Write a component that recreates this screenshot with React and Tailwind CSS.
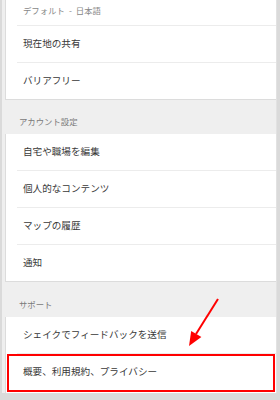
import React from "react";

const font = { fontFamily: '"Noto Sans CJK JP", "Noto Sans", sans-serif' };

function Row({ children, last, highlight }) {
  return (
    <div className="relative">
      <div className="h-[36px] flex items-center pl-[17px] text-[9.6px] text-[#383838] leading-none">
        {children}
      </div>
      {!last && <div className="ml-[11px] h-px bg-[#ececec]" />}
      {highlight && (
        <div className="absolute left-[1px] right-[1px] top-0 bottom-[-2px] border-2 border-[#ff0000]" />
      )}
    </div>
  );
}

function Header({ children, h }) {
  return (
    <div className={`${h} flex items-end pl-[14px] pb-[7px] text-[8.4px] text-[#7a7a7a] leading-[12px]`}>
      {children}
    </div>
  );
}

export default function App() {
  return (
    <div className="relative w-[280px] h-[400px] bg-[#dadada] pl-[2px] pr-[3px] overflow-hidden" style={font}>
      <div className="h-[393px] bg-[#efefef] pl-[3px] border-r border-[#e2e2e2]">
        <div className="bg-white border-b border-l border-[#dcdcdc]">
          <div className="h-[25px] pl-[17px] pt-[4px] text-[8.4px] text-[#888888] leading-[12px] flex">
            <span>デフォルト</span>
            <span className="mx-[4px]">-</span>
            <span>日本語</span>
          </div>
          <div className="ml-[11px] h-px bg-[#ececec]" />
          <Row>現在地の共有</Row>
          <Row last>バリアフリー</Row>
        </div>
        <Header h="h-[34px]">アカウント設定</Header>
        <div className="bg-white border-b border-l border-[#dcdcdc]">
          <Row>自宅や職場を編集</Row>
          <Row>個人的なコンテンツ</Row>
          <Row>マップの履歴</Row>
          <Row last>通知</Row>
        </div>
        <Header h="h-[35px]">サポート</Header>
        <div className="bg-white border-b border-l border-[#dcdcdc] pb-[3px]">
          <Row>シェイクでフィードバックを送信</Row>
          <Row last highlight>概要、利用規約、プライバシー</Row>
        </div>
      </div>
      <svg className="absolute left-0 top-0" width="280" height="400" viewBox="0 0 280 400">
        <line x1="218" y1="299" x2="196" y2="334" stroke="#ff0000" strokeWidth="2" />
        <polygon points="189,346 191.2,330.9 201.4,337.1" fill="#ff0000" />
      </svg>
    </div>
  );
}
